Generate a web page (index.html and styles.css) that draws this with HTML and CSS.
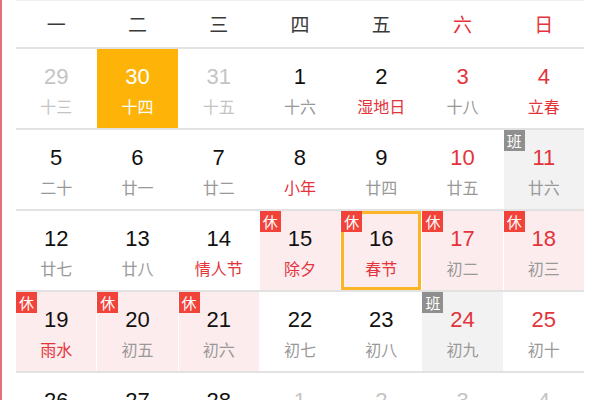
FILE: index.html
```html
<!DOCTYPE html>
<html lang="zh-CN">
<head>
<meta charset="utf-8">
<title>日历</title>
<link rel="stylesheet" href="styles.css">
</head>
<body>
<div class="page">
  <div class="cal">
    <div class="head">
      <div>一</div><div>二</div><div>三</div><div>四</div><div>五</div><div class="we">六</div><div class="we">日</div>
    </div>
    <div class="row">
      <div class="cell other"><span class="num">29</span><span class="lunar">十三</span></div>
      <div class="cell selected"><span class="num">30</span><span class="lunar">十四</span></div>
      <div class="cell other"><span class="num">31</span><span class="lunar">十五</span></div>
      <div class="cell"><span class="num">1</span><span class="lunar">十六</span></div>
      <div class="cell"><span class="num">2</span><span class="lunar fest">湿地日</span></div>
      <div class="cell weekend"><span class="num">3</span><span class="lunar">十八</span></div>
      <div class="cell weekend"><span class="num">4</span><span class="lunar fest">立春</span></div>
    </div>
    <div class="row">
      <div class="cell"><span class="num">5</span><span class="lunar">二十</span></div>
      <div class="cell"><span class="num">6</span><span class="lunar">廿一</span></div>
      <div class="cell"><span class="num">7</span><span class="lunar">廿二</span></div>
      <div class="cell"><span class="num">8</span><span class="lunar fest">小年</span></div>
      <div class="cell"><span class="num">9</span><span class="lunar">廿四</span></div>
      <div class="cell weekend"><span class="num">10</span><span class="lunar">廿五</span></div>
      <div class="cell weekend work"><span class="badge work-badge">班</span><span class="num">11</span><span class="lunar">廿六</span></div>
    </div>
    <div class="row">
      <div class="cell"><span class="num">12</span><span class="lunar">廿七</span></div>
      <div class="cell"><span class="num">13</span><span class="lunar">廿八</span></div>
      <div class="cell"><span class="num">14</span><span class="lunar fest">情人节</span></div>
      <div class="cell rest"><span class="badge">休</span><span class="num">15</span><span class="lunar fest">除夕</span></div>
      <div class="cell rest today"><span class="badge">休</span><span class="num">16</span><span class="lunar fest">春节</span></div>
      <div class="cell rest weekend"><span class="badge">休</span><span class="num">17</span><span class="lunar">初二</span></div>
      <div class="cell rest weekend"><span class="badge">休</span><span class="num">18</span><span class="lunar">初三</span></div>
    </div>
    <div class="row">
      <div class="cell rest"><span class="badge">休</span><span class="num">19</span><span class="lunar fest">雨水</span></div>
      <div class="cell rest"><span class="badge">休</span><span class="num">20</span><span class="lunar">初五</span></div>
      <div class="cell rest"><span class="badge">休</span><span class="num">21</span><span class="lunar">初六</span></div>
      <div class="cell"><span class="num">22</span><span class="lunar">初七</span></div>
      <div class="cell"><span class="num">23</span><span class="lunar">初八</span></div>
      <div class="cell weekend work"><span class="badge work-badge">班</span><span class="num">24</span><span class="lunar">初九</span></div>
      <div class="cell weekend"><span class="num">25</span><span class="lunar">初十</span></div>
    </div>
    <div class="row">
      <div class="cell"><span class="num">26</span><span class="lunar">十一</span></div>
      <div class="cell"><span class="num">27</span><span class="lunar">十二</span></div>
      <div class="cell"><span class="num">28</span><span class="lunar">十三</span></div>
      <div class="cell other"><span class="num">1</span><span class="lunar">十四</span></div>
      <div class="cell other"><span class="num">2</span><span class="lunar">元宵节</span></div>
      <div class="cell other"><span class="num">3</span><span class="lunar">十六</span></div>
      <div class="cell other"><span class="num">4</span><span class="lunar">十七</span></div>
    </div>
  </div>
</div>
</body>
</html>
```
FILE: styles.css
```css
html, body {
  margin: 0;
  padding: 0;
  background: #fff;
}
body {
  font-family: "Liberation Sans", Arial, "Noto Sans CJK SC", sans-serif;
  overflow: hidden;
}
.page {
  height: 400px;
  border-left: 2px solid #e6707a;
  box-sizing: border-box;
  padding-left: 14px;
}
.cal {
  width: 568px;
}
.head {
  display: grid;
  grid-template-columns: repeat(7, 1fr);
  column-gap: 1px;
  border-top: 1px solid #f0f0f0;
  box-sizing: border-box;
  border-bottom: 2px solid #e2e2e2;
  height: 49px;
}
.head div {
  display: flex;
  align-items: center;
  justify-content: center;
  font-family: "Noto Sans CJK SC", sans-serif;
  font-size: 19px;
  color: #3a3a3a;
  padding-bottom: 2px;
}
.head .we {
  color: #e3343c;
}
.row {
  display: grid;
  grid-template-columns: repeat(7, 1fr);
  column-gap: 1px;
  height: 79px;
  border-bottom: 2px solid #e2e2e2;
}
.cell {
  position: relative;
  display: flex;
  flex-direction: column;
  align-items: center;
  padding-top: 16px;
  gap: 7px;
}
.num {
  font-size: 22px;
  line-height: 24px;
  color: #111;
}
.lunar {
  font-family: "Noto Sans CJK SC", sans-serif;
  font-size: 16px;
  line-height: 20px;
  color: #999;
}
.fest {
  color: #e3343c;
}
.weekend .num {
  color: #e3343c;
}
.other .num,
.other .lunar {
  color: #c4c4c4;
}
.selected {
  background: #fdb308;
}
.selected .num,
.selected .lunar {
  color: #fff;
}
.rest {
  background: #fdeced;
}
.work {
  background: #f2f2f2;
}
.today {
  box-shadow: inset 0 0 0 3px #fbb526;
}
.badge {
  position: absolute;
  left: 0;
  top: 0;
  width: 21px;
  height: 21px;
  background: #f2433b;
  color: #fff;
  font-family: "Noto Sans CJK SC", sans-serif;
  font-size: 15px;
  line-height: 21px;
  text-align: center;
}
.work-badge {
  background: #8f8f8f;
}
```
